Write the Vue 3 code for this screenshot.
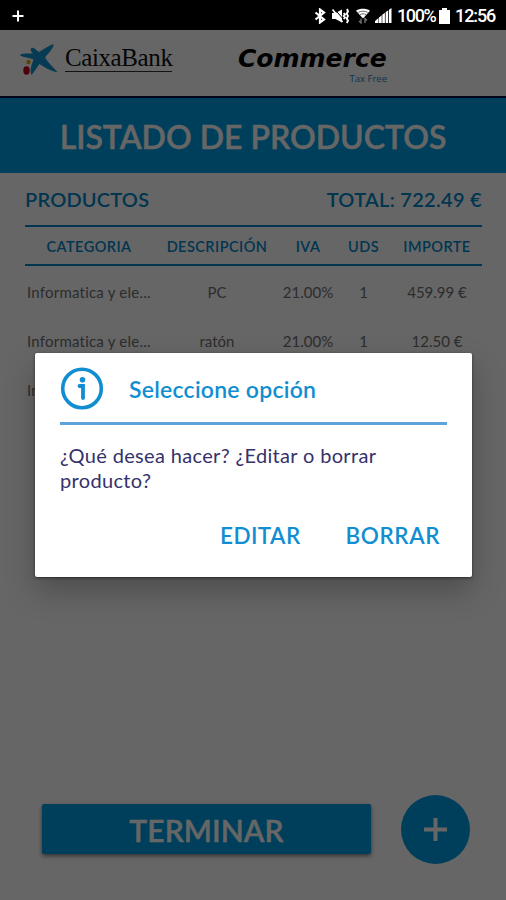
<template>
	<div class="phone">
		<div class="status">
			<svg class="plus" width="12" height="12" viewBox="0 0 12 12">
				<path d="M6 .5v11M.5 6h11" stroke="#fff" stroke-width="2" />
			</svg>
			<div class="status-right">
				<svg width="12" height="16" viewBox="0 0 12 16">
					<path d="M1.500 4.500l8.500 7L6 14.500v-13l4 3-8.500 7" fill="none" stroke="#fff" stroke-width="2.200" />
				</svg>
				<svg class="mute" width="18" height="16" viewBox="0 0 18 16">
					<path d="M1 5h3.500L11 1.500v13L4.500 11H1z" fill="#fff" />
					<path d="M3.500 1l9.500 11" stroke="#000" stroke-width="1" />
					<path d="M1.500 1.500l10 12.500" stroke="#fff" stroke-width="1.800" />
					<path d="M12.700 5l1.300 1.500L12.700 8l1.300 1.500L12.700 11M16 1l1 2.300-1.200 2.300L17 8l-1.200 2.400 1.200 2.300-1.200 2.300" fill="none" stroke="#fff" stroke-width="1.900" />
				</svg>
				<svg class="wifi" width="14" height="16" viewBox="0 0 14 16">
					<path d="M0 2.800C4 .2 10 .2 14 2.800L7 10.500z" fill="#fff" />
					<path d="M2.300 4.300C5 2.800 9 2.800 11.700 4.300M4 6.700c2-1.200 4-1.200 6 0" fill="none" stroke="#000" stroke-width=".6" />
					<path d="M5 10.500v4.500L3 13M9 15v-4.500l2 2" fill="none" stroke="#777" stroke-width="1.300" />
				</svg>
				<svg class="signal" width="17" height="15" viewBox="0 0 17 15">
					<path d="M0 15v-2l3.500-3v5zM4 15V9.500l2.700-2.300V15zM7.300 15V6.800l2.600-2V15zM10.600 15V4.300l2.600-2V15zM14 15V1.800L16.500 0v15z" fill="#fff" />
				</svg>
				<span class="pct">100%</span>
				<svg class="battery" width="11" height="16" viewBox="0 0 11 16">
					<path d="M3 0h5v2h3v14H0V2h3z" fill="#fff" />
				</svg>
				<span class="time">12:56</span>
			</div>
		</div>

		<div class="screen">
			<header class="brand">
				<svg class="star" width="38" height="32" viewBox="0 0 38 32">
					<path d="M0 11.500c1-2.500 5-1.500 13-2.200C10.500 7 10 5 11.500 4c2-1 4 1.500 7.500 4C24 5 29 1.500 33.500 0c.5 4-5 9-8.500 13.500 3 5 7 9 12.500 14.500-7-.5-13-5-18-8C17 23 15 27 11.500 31 9.500 26 11.500 21 13.500 15.500 9 13.500 4 13.500 0 11.500z" fill="#1094cf" />
					<circle cx="8.500" cy="18" r="2.200" fill="#e8a800" />
					<ellipse cx="6.500" cy="26.500" rx="3.200" ry="4.200" fill="#c4001d" />
				</svg>
				<span class="caixa">CaixaBank</span>
				<div class="commerce">
					<strong>Commerce</strong>
					<small>Tax Free</small>
				</div>
			</header>
			<h1>LISTADO DE PRODUCTOS</h1>

			<main>
				<div class="summary">
					<span class="prod">PRODUCTOS</span>
					<span class="total">TOTAL: 722.49 €</span>
				</div>
				<div class="row head">
					<span v-for="col in columns" :key="col">{{ col }}</span>
				</div>
				<div v-for="(item, idx) in products" :key="idx" class="row item">
					<span class="cat">{{ item.category }}</span>
					<span>{{ item.description }}</span>
					<span>{{ item.iva }}</span>
					<span>{{ item.units }}</span>
					<span>{{ item.amount }}</span>
				</div>
			</main>

			<footer>
				<button class="finish">TERMINAR</button>
				<button class="add">
					<svg width="24" height="24" viewBox="0 0 24 24">
						<path d="M11.500 0v23M0 11.500h23" stroke="#fff" stroke-width="4" />
					</svg>
				</button>
			</footer>

			<div v-if="showDialog" class="overlay">
				<div class="dialog">
					<div class="dialog-title">
						<svg width="44" height="44" viewBox="0 0 44 44">
							<circle cx="22" cy="22.500" r="19.300" fill="none" stroke="#118ed2" stroke-width="3.600" />
							<circle cx="22.500" cy="13.800" r="2.800" fill="#118ed2" />
							<path d="M19.500 20H23v12" fill="none" stroke="#118ed2" stroke-width="3.800" stroke-linecap="round" />
						</svg>
						<h2>Seleccione opción</h2>
					</div>
					<p>¿Qué desea hacer? ¿Editar o borrar<br />producto?</p>
					<div class="actions">
						<button class="edit" @click="showDialog = false">EDITAR</button>
						<button class="delete" @click="showDialog = false">BORRAR</button>
					</div>
				</div>
			</div>
		</div>
	</div>
</template>

<script setup>
import { ref } from "vue";

const showDialog = ref(true);

const columns = ["CATEGORIA", "DESCRIPCIÓN", "IVA", "UDS", "IMPORTE"];

const products = ref([
	{ category: "Informatica y ele...", description: "PC", iva: "21.00%", units: 1, amount: "459.99 €" },
	{ category: "Informatica y ele...", description: "ratón", iva: "21.00%", units: 1, amount: "12.50 €" },
	{ category: "In" },
]);
</script>

<style>
	body {
		margin: 0;
	}
</style>

<style scoped>
	.phone {
		width: 506px;
		height: 900px;
		display: flex;
		flex-direction: column;
		overflow: hidden;
		font-family: Lato, "Open Sans", sans-serif;
		font-variant-ligatures: none;
		white-space: nowrap;
	}
	button {
		font-family: inherit;
		border: none;
		padding: 0;
		background: none;
	}
	.status {
		height: 30px;
		background: #000;
		color: #fff;
		display: flex;
		align-items: center;
		justify-content: space-between;
		padding: 1px 11px 0 12px;
		box-sizing: border-box;
		font: 500 18px/28px Roboto, sans-serif;
	}
	.status-right {
		display: flex;
		align-items: center;
	}
	.mute {
		margin-left: 5px;
	}
	.wifi {
		margin-left: 7px;
	}
	.signal {
		margin-left: 5px;
	}
	.pct {
		margin-left: 5px;
		width: 38px;
		letter-spacing: -1.4px;
	}
	.battery {
		margin: 0 5px 0 4px;
	}
	.time {
		width: 40px;
		letter-spacing: -1.1px;
	}
	.screen {
		position: relative;
		flex: 1;
		display: flex;
		flex-direction: column;
		background: #fff;
	}
	.brand {
		height: 68px;
		box-sizing: border-box;
		border-bottom: 2px solid #100a45;
		display: flex;
		align-items: flex-start;
		padding: 14px 0 0 20px;
	}
	.caixa {
		margin-left: 7px;
		width: 107px;
		height: 27px;
		border-bottom: 1px solid #333;
		font: 25px/28px "Liberation Serif", serif;
		letter-spacing: -0.4px;
		color: #111;
	}
	.commerce {
		margin-left: 66px;
		width: 149px;
		display: flex;
		flex-direction: column;
		color: #000;
		font-family: "DejaVu Sans", sans-serif;
	}
	.commerce strong {
		font-size: 25px;
		line-height: 30px;
		font-weight: 700;
		font-style: italic;
	}
	.commerce small {
		align-self: flex-end;
		font-family: "Open Sans", sans-serif;
		font-size: 9.5px;
		line-height: 9px;
		color: #2386bd;
	}
	h1 {
		margin: 0;
		height: 75px;
		background: #009ee3;
		color: #fff;
		font-size: 32px;
		font-weight: 600;
		line-height: 78px;
		text-align: center;
		-webkit-text-stroke: 0.4px #fff;
	}
	main {
		padding: 0 24px 0 25px;
	}
	.summary {
		height: 52px;
		display: flex;
		justify-content: space-between;
		line-height: 53px;
		font-size: 20px;
		font-weight: 600;
		letter-spacing: 0.2px;
		color: #0087c8;
	}
	.total {
		letter-spacing: 0.3px;
	}
	.row {
		display: grid;
		grid-template-columns: 128px 128px 54px 57px 90px;
		text-align: center;
	}
	.head {
		height: 41px;
		box-sizing: border-box;
		border-top: 2px solid #0087c8;
		border-bottom: 2px solid #0087c8;
		color: #0087c8;
		font-size: 14.5px;
		letter-spacing: 0.45px;
		line-height: 39px;
		font-weight: 600;
	}
	.item {
		height: 49px;
		line-height: 52px;
		font-size: 15px;
		color: #707070;
	}
	.cat {
		text-align: left;
		padding-left: 2px;
		letter-spacing: 0.22px;
	}
	footer {
		margin-top: auto;
		display: flex;
		align-items: center;
		padding: 0 36px 36px 42px;
		justify-content: space-between;
	}
	.finish {
		width: 329px;
		height: 50px;
		margin-bottom: 2px;
		background: #009ee3;
		color: #fff;
		border-radius: 2px;
		font-size: 30px;
		font-weight: 600;
		line-height: 52px;
		letter-spacing: 0.1px;
		-webkit-text-stroke: 0.4px #fff;
		box-shadow: 0 2px 4px rgba(0, 0, 0, 0.5);
	}
	.add {
		width: 69px;
		height: 69px;
		border-radius: 50%;
		background: #009ee3;
		display: flex;
		align-items: center;
		justify-content: center;
	}
	.overlay {
		position: absolute;
		inset: 0;
		background: rgba(0, 0, 0, 0.6);
	}
	.dialog {
		margin: 323px 34px 0 35px;
		height: 224px;
		box-sizing: border-box;
		padding: 13px 25px 0;
		background: #fff;
		border-radius: 2px;
		box-shadow: 0 14px 30px rgba(0, 0, 0, 0.25), 0 1px 3px rgba(0, 0, 0, 0.5);
		display: flex;
		flex-direction: column;
	}
	.dialog-title {
		height: 59px;
		box-sizing: border-box;
		display: flex;
		border-bottom: 3px solid #5ba3da;
	}
	.dialog-title h2 {
		margin: 0 0 0 25px;
		font-size: 23px;
		font-weight: 600;
		line-height: 46px;
		letter-spacing: 0.25px;
		color: #118ed2;
	}
	.dialog p {
		margin: 18px 0 0;
		font-size: 20px;
		line-height: 25px;
		letter-spacing: 0.34px;
		color: #35316b;
	}
	.actions {
		display: flex;
		justify-content: flex-end;
		gap: 45px;
		padding-right: 7px;
		margin-top: 28px;
	}
	.actions button {
		font-size: 22.5px;
		line-height: 30px;
		font-weight: 600;
		letter-spacing: 0.4px;
		color: #118ed2;
	}
	.actions .delete {
		letter-spacing: 0.55px;
	}
</style>
